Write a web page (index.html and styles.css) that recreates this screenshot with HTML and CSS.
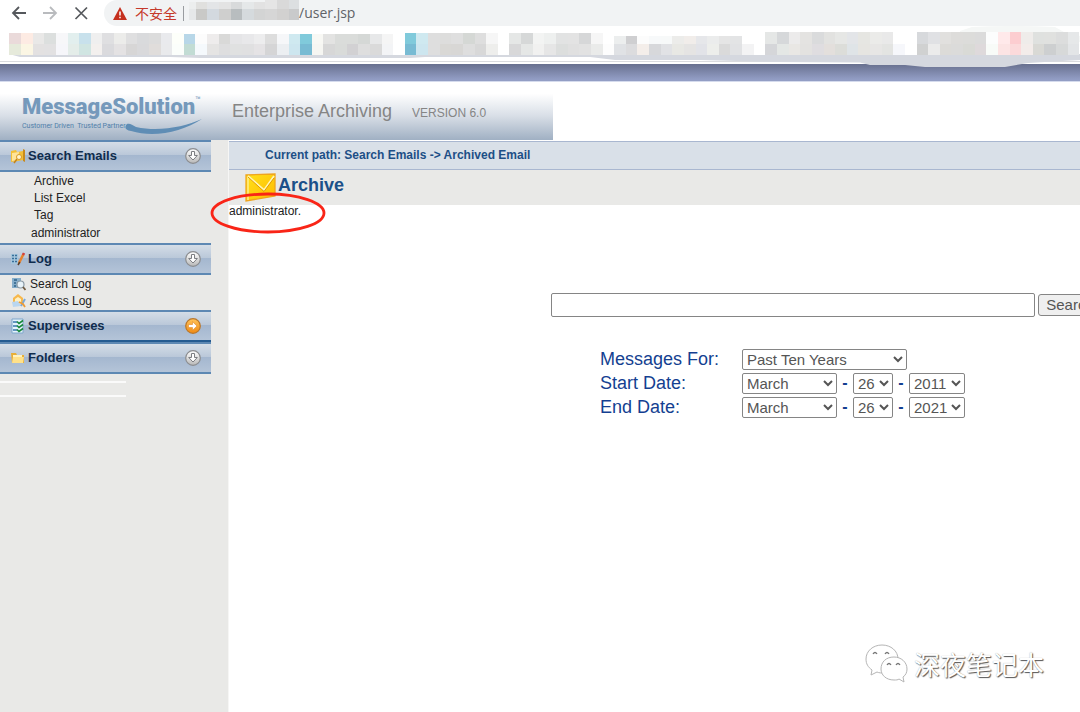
FILE: index.html
```html
<!DOCTYPE html>
<html lang="en">
<head>
<meta charset="utf-8">
<title>MessageSolution Enterprise Archiving</title>
<link rel="stylesheet" href="styles.css">
</head>
<body>
<svg class="defs" width="0" height="0" aria-hidden="true">
  <defs>
    <linearGradient id="silver" x1="0" y1="0" x2="0" y2="1"><stop offset="0" stop-color="#fff"/><stop offset="1" stop-color="#b8b8b8"/></linearGradient>
    <linearGradient id="amber" x1="0" y1="0" x2="0" y2="1"><stop offset="0" stop-color="#ffc35a"/><stop offset="1" stop-color="#f08a12"/></linearGradient>
    <linearGradient id="gold" x1="0" y1="0" x2="1" y2="1"><stop offset="0" stop-color="#ffe21c"/><stop offset="1" stop-color="#ffba00"/></linearGradient>
    <symbol id="down" viewBox="0 0 16 16">
      <circle cx="8" cy="8" r="7.3" fill="url(#silver)" stroke="#8b8d90" stroke-width="1.2"/>
      <path d="M6.5 3.5h3v4h2.800L8 12 3.700 7.500h2.800z" fill="#fff" stroke="#7c7e82" stroke-width="1" stroke-linejoin="round"/>
    </symbol>
    <symbol id="right" viewBox="0 0 16 16">
      <circle cx="8" cy="8" r="7.300" fill="url(#amber)" stroke="#b9772c" stroke-width="1.200"/>
      <path d="M3.500 6.500h4V3.700L12 8l-4.500 4.300V9.500h-4z" fill="#fff" stroke="#e08a2a" stroke-width=".6"/>
    </symbol>
  </defs>
</svg>

<header class="browser">
  <div class="toolbar">
    <button class="nav" aria-label="Back"><svg width="16" height="16" viewBox="0 0 16 16"><path d="M15 8H2M8 2L2 8l6 6" fill="none" stroke="#55585c" stroke-width="1.800"/></svg></button>
    <button class="nav" aria-label="Forward"><svg width="16" height="16" viewBox="0 0 16 16"><path d="M1 8H14M8 2l6 6-6 6" fill="none" stroke="#b9bbbe" stroke-width="1.800"/></svg></button>
    <button class="nav" aria-label="Stop loading"><svg width="16" height="16" viewBox="0 0 16 16"><path d="M2.500 2.500l11.500 11.500M14 2.500l-11.500 11.500" stroke="#55585c" stroke-width="1.700"/></svg></button>
    <div class="address">
      <svg width="14" height="13" viewBox="0 0 14 13"><path d="M7 0l7 13H0z" fill="#c5301f"/><path d="M7 4.500v4M7 9.700v1.600" stroke="#fff" stroke-width="1.500"/></svg>
      <span class="unsafe" lang="zh">不安全</span>
      <span class="divider"></span>
      <svg class="host" id="host" width="112" height="26" viewBox="0 0 112 26" aria-hidden="true"></svg>
      <span class="url">/user.jsp</span>
    </div>
  </div>
  <svg class="bookmarks" id="bookmarks" width="1080" height="44" viewBox="0 0 1080 44" aria-hidden="true">
    <path d="M9 28H1080V34L1045 36 1028 37 1005 41H925L905 39 870 39 860 36.500 775 36 700 34H615L590 31H425L410 32H200L170 31H20z" fill="#d5d8df"/>
    <path d="M960 5L972 1Q1010-1 1055 1L1064 6 1080 10V16H960z" fill="#f5f7f6"/>
  </svg>
</header>
<div class="stripe"></div>

<div class="banner">
  <div class="brand">
    <div class="logo">
      <div class="wordmark">MessageSolution<span class="tm">™</span></div>
      <div class="tagline">Customer Driven&nbsp; Trusted Partner</div>
      <svg class="swoosh" width="79" height="17" viewBox="0 0 79 17"><path d="M3 6C0 9 1 12 7 13C30 20 58 14 78 1C60 9 35 14 12 9C8 7 6 5 3 6z" fill="#5f8db5"/></svg>
    </div>
    <span class="product">Enterprise Archiving</span>
    <span class="version">VERSION 6.0</span>
  </div>
</div>

<div class="page">
  <nav class="sidebar">
    <section>
      <button class="group">
        <svg class="icon" width="16" height="16" viewBox="0 0 16 16"><path d="M1 3l5-1 1 2 6-1v9l-5 1-7 1z" fill="#f3bf37"/><path d="M2 5l7-1-1 8-6 1z" fill="#ffe49a"/><path d="M13 1l2 1v12l-2-1z" fill="#c98b1d"/><circle cx="9" cy="9" r="2.500" fill="#fff3d0" stroke="#d99a24"/><path d="M7 11l-3 4" stroke="#c5831b" stroke-width="1.500"/></svg>
        <span>Search Emails</span>
        <svg class="toggle" width="16" height="16"><use href="#down"/></svg>
      </button>
      <ul class="links">
        <li><a href="#">Archive</a></li>
        <li><a href="#">List Excel</a></li>
        <li><a href="#">Tag</a></li>
        <li class="user"><a href="#">administrator</a></li>
      </ul>
    </section>
    <section>
      <button class="group">
        <svg class="icon" width="16" height="16" viewBox="0 0 16 16"><path d="M1 3h7v10H1z" fill="#a6c6dc"/><path d="M2 4.500h2M5 4.500h2M2 7.500h2M5 7.500h2M2 10.500h2M5 10.500h2" stroke="#396f9a" stroke-width="1.500"/><path d="M13.500 3L9 12" stroke="#e6812c" stroke-width="2.500"/><path d="M9.800 11L8 14" stroke="#5a3c24" stroke-width="1.500"/><path d="M13 4l1-2" stroke="#d34040" stroke-width="2.500"/></svg>
        <span>Log</span>
        <svg class="toggle" width="16" height="16"><use href="#down"/></svg>
      </button>
      <ul class="links with-icons">
        <li><svg width="14" height="14" viewBox="0 0 14 14"><path d="M0 1h9v10H0z" fill="#86aecb"/><path d="M2 3h3M2 6h2M2 9h2" stroke="#2f6389" stroke-width="1.500"/><circle cx="8.500" cy="7.500" r="3.500" fill="#e8f2f8" stroke="#8b9aa5" stroke-width="1.200"/><path d="M11 10l2.500 3" stroke="#6d5840" stroke-width="1.800"/></svg><a href="#">Search Log</a></li>
        <li><svg width="14" height="14" viewBox="0 0 14 14"><path d="M1 4l5-4 5 4v5H1z" fill="#f7b84c"/><path d="M3 5l3-2 3 2v3H3z" fill="#fff0c2"/><path d="M0 8l6-1 3 5-8 1z" fill="#b9d6f0"/><path d="M13 5l-4 7" stroke="#7ba8d7" stroke-width="2"/><path d="M7 8l4 2 2 3" stroke="#ed9c36" stroke-width="1.800" fill="none"/></svg><a href="#">Access Log</a></li>
      </ul>
    </section>
    <section>
      <button class="group strong">
        <svg class="icon" width="16" height="16" viewBox="0 0 16 16"><path d="M2 1h11v14H2z" fill="#e5f3fb" stroke="#7ea7cc"/><path d="M3 4h4M3 8h4M3 12h4" stroke="#3978ad" stroke-width="1.500"/><path d="M7 3.500l2 2 4-3M7 7.500l2 2 4-3M7 11.500l2 2 4-3" fill="none" stroke="#16873a" stroke-width="1.600"/></svg>
        <span>Supervisees</span>
        <svg class="toggle" width="16" height="16"><use href="#right"/></svg>
      </button>
    </section>
    <section>
      <button class="group">
        <svg class="icon" width="16" height="16" viewBox="0 0 16 16"><path d="M1 3h5l1 2h7v8H2z" fill="#e8ae35"/><path d="M3 7h11l-1 6H2z" fill="#ffe18a"/><path d="M3 5h9v2H3z" fill="#fff2c0"/></svg>
        <span>Folders</span>
        <svg class="toggle" width="16" height="16"><use href="#down"/></svg>
      </button>
    </section>
    <div class="slot"></div>
  </nav>

  <main class="content">
    <div class="path">Current path: Search Emails -&gt; Archived Email</div>
    <div class="title">
      <svg width="32" height="30" viewBox="0 0 32 30"><path d="M1 2l29-1v22L1 28z" fill="url(#gold)" stroke="#efa51d" stroke-width="1.300"/><path d="M3 27V4" stroke="#fff2a0" stroke-width="1.300"/><path d="M3 3l16 14L29 3" fill="none" stroke="#fff6b8" stroke-width="1.800"/><path d="M3 4l16 14.500L29 5" fill="none" stroke="#e29b00" stroke-width="1"/></svg>
      <h1>Archive</h1>
    </div>
    <div class="who">administrator.
      <svg class="ring" width="116" height="42" viewBox="0 0 116 42"><ellipse cx="58" cy="21" rx="56" ry="19" fill="none" stroke="#f92517" stroke-width="2.800"/></svg>
    </div>
    <form class="search">
      <div class="query">
        <input type="text" aria-label="Search archived email">
        <button type="button">Search</button>
      </div>
      <div class="filters">
        <label for="range">Messages For:</label>
        <div class="fields"><select id="range" class="range"><option>Past Ten Years</option></select></div>
        <label for="start">Start Date:</label>
        <div class="fields">
          <select id="start" class="month"><option>March</option></select><b>-</b><select class="day" aria-label="Start day"><option>26</option></select><b>-</b><select class="year" aria-label="Start year"><option>2011</option></select>
        </div>
        <label for="end">End Date:</label>
        <div class="fields">
          <select id="end" class="month"><option>March</option></select><b>-</b><select class="day" aria-label="End day"><option>26</option></select><b>-</b><select class="year" aria-label="End year"><option>2021</option></select>
        </div>
      </div>
    </form>
  </main>
</div>

<div class="watermark" lang="zh">
  <svg width="44" height="40" viewBox="0 0 44 40" fill="#fff" stroke="#b5b5b5" stroke-width="1">
    <path d="M17 1C8 1 1 7 1 15c0 5 2 8 6 11l-1 5 6-3c2 1 5 1 7 1 8 0 14-6 14-14S26 1 17 1z"/>
    <path d="M29 13c-8 0-13 5-13 12 0 6 5 11 13 11 2 0 4 0 5-1l5 3-1-5c3-2 4-5 4-8 0-7-6-12-13-12z"/>
    <path d="M8 10q2-3 4 0M20 10q2-3 4 0M22 21q2-3 4 0M31 21q2-3 4 0" fill="none" stroke="#777" stroke-width="1.300"/>
  </svg>
  <span>深夜笔记本</span>
</div>
<script src="mosaic.js"></script>
</body>
</html>
```

FILE: styles.css
```css
* { box-sizing: border-box; }
body {
  margin: 0;
  min-height: 100vh;
  display: flex;
  flex-direction: column;
  position: relative;
  overflow: hidden;
  background: #fff;
  font: 12px/18px "Liberation Sans", Arial, sans-serif;
  color: #222;
}
button { font: inherit; margin: 0; }
svg { flex: none; }
.defs { position: absolute; }

.browser { height: 64px; position: relative; z-index: 1; }
.toolbar { display: flex; align-items: center; height: 26px; padding-left: 11px; }
.nav { width: 16px; height: 16px; margin-right: 15px; padding: 0; border: 0; background: none; display: flex; }
.address {
  flex: 1;
  height: 26px;
  display: flex;
  align-items: center;
  padding-left: 9px;
  background: #f1f3f4;
  border-radius: 13px 0 0 13px;
  font: 14px/20px "Open Sans", "Noto Sans CJK SC", sans-serif;
  color: #5f6368;
}
.unsafe { margin-left: 8px; color: #c5392b; font-family: "Noto Sans CJK SC", sans-serif; }
.divider { width: 1px; height: 15px; margin: 0 3px 0 6px; background: #999ca0; }
.bookmarks { display: block; min-width: 100%; }
.browser::after { content: ""; position: absolute; z-index: -1; left: 0; right: 0; top: 61px; height: 1px; background: #dadbde; }
.stripe { height: 18px; flex: none; background: linear-gradient(#68708f, #929dc4 90%); border-bottom: 1px solid #d5dbed; }

.banner { height: 58px; flex: none; }
.brand {
  display: flex;
  align-items: center;
  width: 553px;
  height: 58px;
  padding-left: 22px;
  background: linear-gradient(#fff 20%, #d9dfe7 58%, #a0b0c3);
}
.logo { position: relative; width: 210px; padding-top: 3px; color: #7599bb; }
.wordmark { font: 900 22px/26px Roboto, "Liberation Sans", sans-serif; display: flex; }
.tm { font-size: 9px; font-weight: normal; line-height: 12px; }
.tagline { font: 7px/12px Roboto, "Liberation Sans", sans-serif; color: #4f7faa; }
.swoosh { position: absolute; left: 102px; bottom: -3px; }
.product { font-size: 18px; color: #858585; }
.version { margin-left: 20px; color: #858585; padding-top: 3px; }

.page { flex: 1; display: flex; background: #e9e9e7; }
.sidebar { width: 229px; flex: none; padding-right: 17px; border-right: 1px solid #f6f6f5; }
.group {
  display: flex;
  align-items: center;
  width: 100%;
  height: 32px;
  padding: 0 10px;
  border: 0;
  border-top: 2px solid #5d88b3;
  border-bottom: 2px solid #5d88b3;
  background: linear-gradient(#d4dde7, #bac8d9 46%, #a4b7cf 47%, #b4c4d8);
  color: #0f2c4d;
  font-weight: bold;
  font-size: 13px;
}
.group.strong { border-bottom-color: #245b91; }
.icon { margin-right: 2px; }
.toggle { margin-left: auto; }
.links { list-style: none; margin: 0; padding: 0 0 0 34px; }
.links a { color: #222; text-decoration: none; }
.links li { display: flex; align-items: center; height: 17px; }
.links .user { height: 20px; margin-left: -3px; }
.links.with-icons { padding: 0 0 1px 12px; }
.with-icons li { gap: 4px; }
.slot { width: 126px; height: 16px; margin-top: 7px; border: 1px solid #fafafa; border-width: 2px 0; }

.content { flex: 1; min-width: 0; background: #fff; }
.path {
  height: 29px;
  margin-top: 1px;
  padding-left: 36px;
  border-top: 1px solid #a9b7d0;
  border-bottom: 1px solid #a9b7d0;
  background: #d9e0e8;
  font-weight: bold;
  line-height: 27px;
  color: #1d4f86;
}
.title { display: flex; align-items: center; height: 35px; padding-left: 16px; gap: 1px; background: #e9e9e7; }
.title h1 { margin: 0; padding-bottom: 5px; font-size: 18px; line-height: 22px; color: #1b5089; }
.who { position: relative; width: max-content; line-height: 13px; }
.ring { position: absolute; left: -19px; top: -13px; }

.search { padding-top: 75px; padding-left: 322px; color: #143f91; }
.query { display: flex; align-items: center; gap: 3px; margin-right: -22px; }
.query input { flex: 1; min-width: 0; height: 24px; border: 1px solid #858585; border-radius: 2px; }
.query button {
  width: 64px;
  height: 22px;
  padding: 0;
  border: 1px solid #858585;
  border-radius: 3px;
  background: #efefef;
  color: #555;
  font-size: 15px;
}
.filters { display: grid; grid-template-columns: 142px 1fr; grid-auto-rows: 24px; align-items: center; margin-top: 30px; padding-left: 49px; font-size: 18px; }
.fields { display: flex; align-items: center; }
.fields b { width: 16px; text-align: center; font-size: 16px; }
select { height: 21px; padding: 0; border: 1px solid #858585; border-radius: 2px; background-color: #fff; color: #555; font: 15px "Liberation Sans", Arial, sans-serif; }
.range { width: 165px; }
.month { width: 95px; }
.day { width: 40px; }
.year { width: 56px; }

.watermark {
  position: absolute;
  right: 36px;
  bottom: 28px;
  display: flex;
  align-items: center;
  gap: 5px;
  color: #fff;
  font: 26px/40px "Noto Sans CJK SC", sans-serif;
  text-shadow: 1px 1px 1px #555, 0 0 1px #aaa;
}
```

FILE: mosaic.js
```js
// Colour pairs (upper, lower) of the blurred bookmark cells, left to right.
const cells = `eadada e6eadb|fdebe3 fbf6e4|e9e8e7 e3e1e1|dcdfde e2e1e2|f7f7f9 f6f6fa|e2efee e4ede9|c8e1ec d0e5e2|efefef f3f0ee|dfdfe1 dadadd|ececea e4e2e3|dfdfe0 d7d6d6|d9dadc d9d9db|dcdcdc e0dddb|e9eaed e9eaec|fdfffa fbfefb|b8d7e8 c2dcd4|fcfcfc f5f9fc|eeecec e5e4e3|d9d9d8 dededf|e5e5e7 e0e1e1|e8e8ea e0e0e1|ededee e5e3e5|dddddd d5d5d6|f6f7f9 eceff2|cfe9f0 cde6ef|80cadb 78bbd3|f8f8f4 f6f6f2|e3e3e2 d7d7d7|dadcda d9dbd9|dadcda d2d1d3|d5d8d6 dedede|e7e8e9 dadada|f5f5f5 f3f4f6|ffffff ffffff|80cadb 78bbd3|cfe9f0 cde6ef|dedede dedede|dddddc d9d8d5|dfdfdf d8d7d5|d5d8d5 dedede|dedede d8d8d8|f6f6f6 eeeeec|ffffff ffffff|e5e7e6 d8d8d9|d6d8d8 e5e7e6|f3f4f3 f1f1f0|eef0ef e6e6e6|e2e3e3 dcdedd|e3e3e3 e0e0e0|d6d7d8 e2e2e2|f6f6f6 eaebea|ffffff fdfdfd|eceeee e0e2e5|cfcfd1 dcdcde|fcfcfc f4eeea|f7f9fa d7d8db|f7f9f9 e1e2e5|ececea e8e8e4|f1edea e5e4e3|e6e7ea e2e3e8|ebecec edeeeb|e5e5e5 dadada|e3e4e5 e1e2e4|ffffff f3f3f4|ffffff ffffff|e5e7e6 d5d6d9|d6d8da e4e7e5|ecebeb e9e7e4|e4e3e1 e3e2e0|dadbdc dfdde0|e2e2e0 e3dfdc|e6e7e5 dcddd9|e3e5e8 dfe4e7|e6e6e2 e6e5e1|ebebe9 e7e6e5|e9e9e9 e3e4e2|ffffff f6f7fb|ffffff ffffff|d7d9dc d0d1d1|e0e1e4 ebebeb|e1e0de dcdbd8|dddcda dbdbda|dcdcda d9dad6|dbdbdb ded9db|fcfdfd f8fbf8|ffe9ea fce4e4|fccdd0 fbdadb|efecea f3ecea|dfe1df d9d9d5|e0e1df cdcfd0|dcdddd d7d9d9|e6e8e9 e3e5e7`.split('|');

function rect(svg, x, y, w, h, fill) {
  const r = document.createElementNS('http://www.w3.org/2000/svg', 'rect');
  Object.entries({ x, y, width: w, height: h, fill }).forEach(([k, v]) => r.setAttribute(k, v));
  svg.append(r);
}

const bar = document.getElementById('bookmarks');
const edge = i => Math.round(9.4 + i * 11.63);
cells.forEach((pair, i) => {
  const [upper, lower] = pair.split(' ');
  const x = edge(i), w = edge(i + 1) - x;
  const top = i > 64 ? 6 : i > 51 ? 10 : i > 14 && i < 34 ? 8 : 7;
  rect(bar, x, top, w, 18 - top, '#' + upper);
  rect(bar, x, 18, w, 11, '#' + lower);
});

const host = document.getElementById('host');
const hostCells = 'eceeee e6e8e9|e0e0de c9c9c7|e3e5e7 d3d9df|e3e3e3 cfcfce|d8dadb b8bdbf|e5e8e9 d5dadd|e2e2e2 d3d4d4|e5e5e5 d6d6d6|d9d9d9 d2d1d0|dcdfe1 c9cacb|e3e4e5 cbcccd'.split('|');
hostCells.forEach((pair, i) => {
  const [upper, lower] = pair.split(' ');
  const x = i ? Math.round(-3 + i * 11.63) : 2;
  const w = Math.round(-3 + (i + 1) * 11.63) - x;
  rect(host, x, i > 6 ? 0 : 2, w, 9, '#' + upper);
  rect(host, x, 9, w, 11, '#' + lower);
});
```
